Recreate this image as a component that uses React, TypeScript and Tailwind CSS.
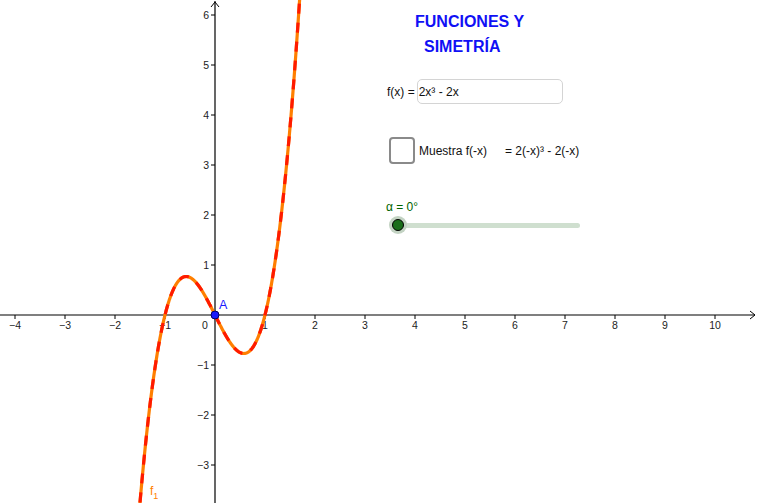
import React from 'react';

// Graph frame: origin at (215, 315), 50px per unit
const OX = 215;
const OY = 315;
const U = 50;

const f = (x: number) => 2 * x * x * x - 2 * x;

const curvePath = () => {
    const pts: string[] = [];
    for (let x = -1.62; x <= 1.75; x += 0.005) {
        const px = OX + U * x;
        const py = OY - U * f(x);
        pts.push(`${pts.length === 0 ? 'M' : 'L'}${px.toFixed(2)} ${py.toFixed(2)}`);
    }
    return pts.join(' ');
};

const xTicks = [-4, -3, -2, -1, 1, 2, 3, 4, 5, 6, 7, 8, 9, 10];
const yTicks = [-3, -2, -1, 1, 2, 3, 4, 5, 6];

const fmt = (n: number) => (n < 0 ? `\u2212${-n}` : `${n}`);

function Graph() {
    const d = curvePath();
    return (
        <svg width={758} height={503} className="absolute inset-0" style={{ fontFamily: '"Liberation Sans", Arial, sans-serif' }}>
            {/* axes */}
            <line x1={0} y1={OY} x2={755} y2={OY} stroke="#000" strokeWidth={1.2} />
            <path d="M750 311 L755 315 L750 319" fill="none" stroke="#000" strokeWidth={1} />
            <line x1={OX} y1={1} x2={OX} y2={503} stroke="#000" strokeWidth={1.2} />
            <path d="M211 7 L215 2 L219 7" fill="none" stroke="#000" strokeWidth={1} />

            {xTicks.map((t) => (
                <g key={`x${t}`}>
                    <line x1={OX + U * t} y1={OY} x2={OX + U * t} y2={OY + 4} stroke="#000" strokeWidth={1} />
                    <text x={OX + U * t} y={OY + 14} fontSize={10.5} textAnchor="middle" fill="#222">
                        {fmt(t)}
                    </text>
                </g>
            ))}
            <text x={205} y={OY + 14} fontSize={10.5} textAnchor="middle" fill="#222">0</text>

            {yTicks.map((t) => (
                <g key={`y${t}`}>
                    <line x1={OX - 4} y1={OY - U * t} x2={OX} y2={OY - U * t} stroke="#000" strokeWidth={1} />
                    <text x={209} y={OY - U * t + 4} fontSize={10.5} textAnchor="end" fill="#222">
                        {fmt(t)}
                    </text>
                </g>
            ))}

            {/* f1 solid orange, f dashed red on top */}
            <path d={d} fill="none" stroke="#ff7f00" strokeWidth={3.2} strokeLinejoin="round" />
            <path d={d} fill="none" stroke="#ff1a00" strokeWidth={3.2} strokeDasharray="10 9" />

            {/* point A */}
            <circle cx={OX} cy={OY} r={4} fill="#1919ff" stroke="#000066" strokeWidth={1} />
            <text x={219} y={309} fontSize={12.5} fill="#1919ff">A</text>

            <text x={150} y={495} fontSize={12} fill="#ff7f00">
                f
                <tspan fontSize={9} dy={4}>1</tspan>
            </text>
        </svg>
    );
}

// Widgets panel that sits on the graphics view
function Controls() {
    return (
        <div className="absolute left-[386px] top-[9px] flex flex-col text-[12px] text-[#111]">
            <div className="pl-[29px] text-[16px] leading-[25px] font-bold text-[#1010f5]">
                <div>FUNCIONES Y</div>
                <div className="pl-[9px]">SIMETRÍA</div>
            </div>

            <div className="mt-[20px] flex items-center gap-[2px] pl-[1px]">
                <span>f(x) =</span>
                <div className="w-[146px] h-[25px] rounded-[5px] border border-[#d4d4d4] bg-white flex items-center pl-[1px]">
                    2x³ - 2x
                </div>
            </div>

            <div className="mt-[33px] flex items-center pl-[3px]">
                <div className="w-[26px] h-[27px] rounded-[4px] border-2 border-[#8a8a8a] bg-white" />
                <span className="ml-[4px]">Muestra f(-x)</span>
                <span className="ml-[18px]">= 2(-x)³ - 2(-x)</span>
            </div>

            <div className="mt-[34px] text-[#006400]">α = 0°</div>
            <div className="ml-[3px] w-[194px] h-[18px] flex items-center relative">
                <div className="ml-[9px] w-[182px] h-[5px] rounded-full bg-[#cfdfcf]" />
                <div className="absolute left-0 top-0 w-[18px] h-[18px] rounded-full bg-[#c3d3c3] flex items-center justify-center">
                    <div className="w-[12px] h-[12px] rounded-full bg-[#1a6e1a] border border-black" />
                </div>
            </div>
        </div>
    );
}

export default function App() {
    return (
        <div className="relative w-[758px] h-[503px] bg-white overflow-hidden font-['Liberation_Sans',Arial,sans-serif]">
            <Graph />
            <Controls />
        </div>
    );
}
